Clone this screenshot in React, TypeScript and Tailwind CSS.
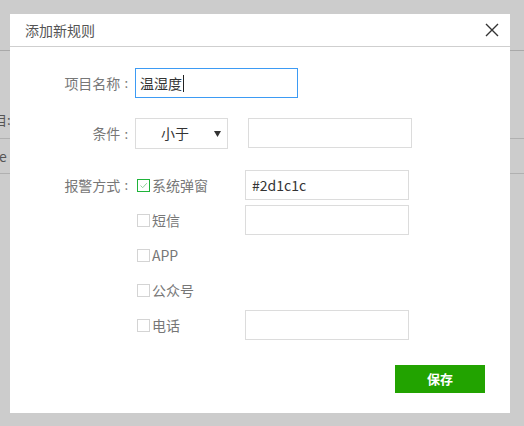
import React from "react";

const font = { fontFamily: '"Noto Sans CJK SC", "Noto Sans", sans-serif' };

function Check({ checked }: { checked?: boolean }) {
  return (
    <span
      className={`flex h-[13px] w-[13px] shrink-0 items-center justify-center border bg-white ${
        checked ? "border-[#1fb33a]" : "border-[#d4d4d4]"
      }`}
    >
      {checked && (
        <svg width="9" height="9" viewBox="0 0 9 9">
          <path d="M1.5 4.5 L3.7 6.7 L7.8 2.2" fill="none" stroke="#8fd19a" strokeWidth="1" />
        </svg>
      )}
    </span>
  );
}

function Label({ text }: { text: string }) {
  return (
    <span className="flex h-full w-[110px] items-center justify-end text-[14px] text-[#777]">
      <span>{text}</span>
      <span className="ml-[4px] mr-[2px] text-[13px]">:</span>
    </span>
  );
}

const rows: { label: string; checked?: boolean; input?: string | null }[] = [
  { label: "系统弹窗", checked: true, input: "#2d1c1c" },
  { label: "短信", input: "" },
  { label: "APP", input: null },
  { label: "公众号", input: null },
  { label: "电话", input: "" },
];

export default function App() {
  return (
    <div className="relative h-[426px] w-[524px] overflow-hidden bg-[#cccccc]" style={font}>
      {/* page behind the overlay */}
      <div className="flex flex-col text-[#555]">
        <div className="h-[51px] border-b border-[#a9a9a9]" />
        <div className="flex h-[88px] items-end border-b border-[#b0b0b0] pb-[8px]">
          <span className="ml-[-6px] text-[13px] leading-[20px]">目:</span>
        </div>
        <div className="flex h-[35px] items-center border-b border-[#b0b0b0]">
          <span className="ml-[-1px] text-[14px]">e</span>
        </div>
      </div>

      {/* dialog */}
      <div className="absolute left-[10px] top-[14px] flex h-[399px] w-[500px] flex-col bg-white">
        <div className="flex h-[33px] shrink-0 items-center justify-between border-b border-[#cfcfcf] pl-[15px] pr-[11px]">
          <span className="text-[14px] text-[#555]">添加新规则</span>
          <svg width="14" height="14" viewBox="0 0 14 14">
            <path d="M1 1 L13 13 M13 1 L1 13" stroke="#333" strokeWidth="1.4" fill="none" />
          </svg>
        </div>

        <div className="flex flex-col pl-[10px] pt-[21px]">
          <div className="flex h-[30px] items-center">
            <Label text="项目名称" />
            <div className="ml-[5px] flex h-[30px] w-[163px] items-center border border-[#3d9bf4] pl-[4px] text-[14px] text-[#333]">
              温湿度<span className="ml-[1px] inline-block h-[17px] w-px bg-[#222]" />
            </div>
          </div>

          <div className="mt-[20px] flex h-[31px] items-start">
            <div className="h-[31px]">
              <Label text="条件" />
            </div>
            <div className="ml-[5px] flex h-[31px] w-[93px] items-center border border-[#dcdcdc] pl-[25px] pr-[6px] text-[14px] text-[#333]">
              <span className="flex-1">小于</span>
              <svg width="7" height="6" viewBox="0 0 7 6">
                <path d="M0 0 L7 0 L3.5 6 Z" fill="#333" />
              </svg>
            </div>
            <div className="ml-[20px] h-[30px] w-[164px] border border-[#dcdcdc]" />
          </div>

          <div className="mt-[21px] flex items-start">
            <div className="h-[30px]">
              <Label text="报警方式" />
            </div>
            <div className="ml-[5px] flex flex-col gap-[5px]">
              {rows.map((r) => (
                <div key={r.label} className="flex h-[30px] items-center">
                  <div className="flex w-[110px] items-center gap-[2px] pl-[2px] text-[14px] text-[#777]">
                    <Check checked={r.checked} />
                    <span>{r.label}</span>
                  </div>
                  {r.input !== null && (
                    <div className="flex h-[30px] w-[164px] items-center border border-[#dcdcdc] pl-[6px] text-[14px] text-[#333]">
                      {r.input}
                    </div>
                  )}
                </div>
              ))}
            </div>
          </div>

          <div className="mt-[25px] flex justify-end pr-[25px]">
            <button className="flex h-[28px] w-[90px] items-center justify-center bg-[#22a300] text-[13px] font-bold text-white">
              保存
            </button>
          </div>
        </div>
      </div>
    </div>
  );
}
